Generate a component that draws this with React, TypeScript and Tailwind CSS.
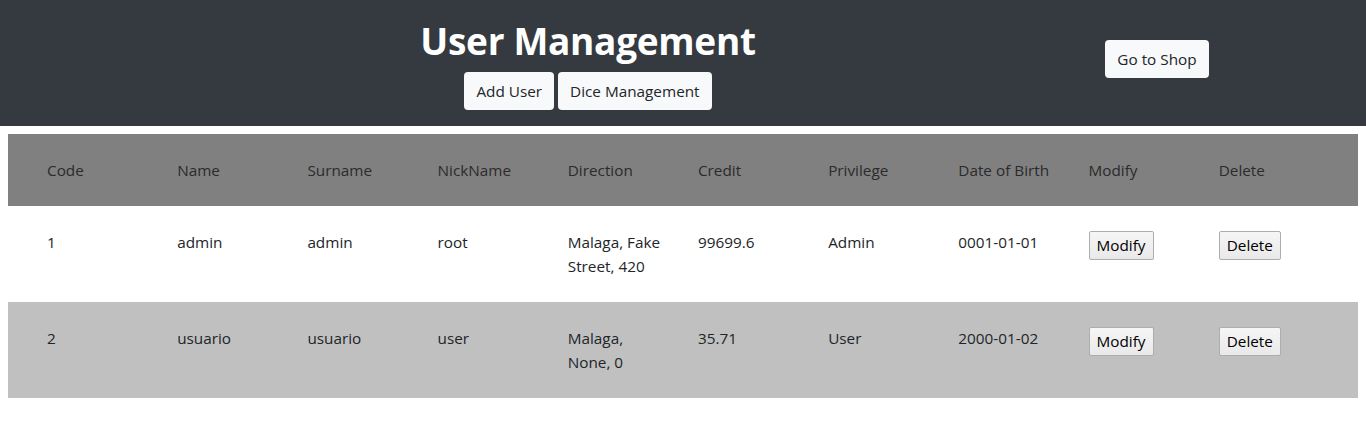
import React from 'react'

type User = {
  code: string
  name: string
  surname: string
  nick: string
  direction: string
  credit: string
  privilege: string
  birth: string
}

const users: User[] = [
  {
    code: '1',
    name: 'admin',
    surname: 'admin',
    nick: 'root',
    direction: 'Malaga, Fake Street, 420',
    credit: '99699.6',
    privilege: 'Admin',
    birth: '0001-01-01',
  },
  {
    code: '2',
    name: 'usuario',
    surname: 'usuario',
    nick: 'user',
    direction: 'Malaga, None, 0',
    credit: '35.71',
    privilege: 'User',
    birth: '2000-01-02',
  },
]

const headers = ['Code', 'Name', 'Surname', 'NickName', 'Direction', 'Credit', 'Privilege', 'Date of Birth', 'Modify', 'Delete']

function Cell({ children }: { children: React.ReactNode }) {
  return <div className="w-[130.2px] pr-[34px] py-6">{children}</div>
}

function NativeButton({ label }: { label: string }) {
  return (
    <button
      type="button"
      className="mt-[1px] h-[29px] px-[7px] border border-[#adadad] rounded-[2px] bg-gradient-to-b from-[#f6f6f6] to-[#e9e9e9] text-black leading-none"
    >
      {label}
    </button>
  )
}

function App() {
  return (
    <div className="min-h-[430px] bg-white text-[#212529] text-[15.3px] leading-6 font-['Segoe_UI','Open_Sans',sans-serif]">
      <header className="h-[126px] bg-[#343a40] flex pl-[176px]">
        <div className="w-[824px] flex flex-col items-center pt-[17px]">
          <h1 className="text-[37px] leading-[48px] font-bold text-white tracking-[-0.3px]">User Management</h1>
          <div className="flex gap-1 mt-[7px]">
            <button type="button" className="h-[38px] px-3 rounded bg-[#f8f9fa] text-[#212529]">
              Add User
            </button>
            <button type="button" className="h-[38px] px-3 rounded bg-[#f8f9fa] text-[#212529]">
              Dice Management
            </button>
          </div>
        </div>
        <div className="w-[314px] flex justify-center pt-10">
          <button type="button" className="h-[38px] px-3 rounded bg-[#f8f9fa] text-[#212529]">
            Go to Shop
          </button>
        </div>
      </header>

      <div className="mx-2 mt-2">
        <div className="flex pl-[39px] bg-[#808080] text-[#2b2b2b]">
          {headers.map((h) => (
            <Cell key={h}>{h}</Cell>
          ))}
        </div>
        {users.map((u, i) => (
          <div key={u.code} className={i % 2 === 0 ? 'flex pl-[39px] bg-white' : 'flex pl-[39px] bg-[#c0c0c0]'}>
            <Cell>{u.code}</Cell>
            <Cell>{u.name}</Cell>
            <Cell>{u.surname}</Cell>
            <Cell>{u.nick}</Cell>
            <Cell>{u.direction}</Cell>
            <Cell>{u.credit}</Cell>
            <Cell>{u.privilege}</Cell>
            <Cell>{u.birth}</Cell>
            <Cell>
              <NativeButton label="Modify" />
            </Cell>
            <Cell>
              <NativeButton label="Delete" />
            </Cell>
          </div>
        ))}
      </div>
    </div>
  )
}

export default App
